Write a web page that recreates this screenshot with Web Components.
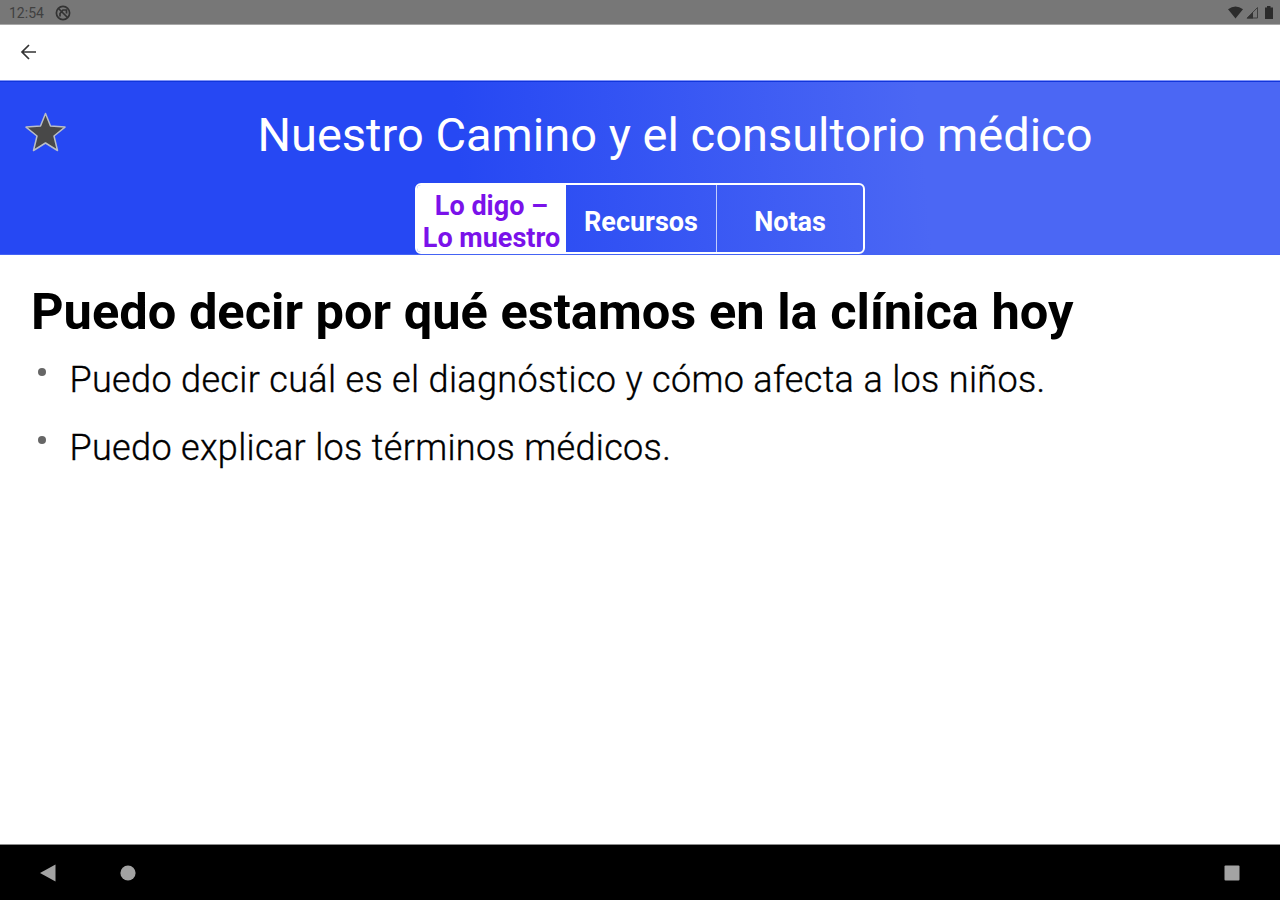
<!DOCTYPE html>
<html lang="es">
<head>
<meta charset="utf-8">
<meta name="viewport" content="width=device-width, initial-scale=1">
<title>Nuestro Camino y el consultorio médico</title>
<style>
    body {
        margin: 0;
        font-family: Roboto, "Liberation Sans", sans-serif;
        background-color: #fff;
    }
</style>
</head>
<body>
<app-screen>
    <status-bar slot="top" time="12:54"></status-bar>
    <tool-bar slot="top"></tool-bar>
    <topic-header slot="top">
        <span slot="title">Nuestro Camino y el consultorio médico</span>
        <tab-group slot="tabs">
            <tab-item selected>Lo digo –<br>Lo muestro</tab-item>
            <tab-item>Recursos</tab-item>
            <tab-item>Notas</tab-item>
        </tab-group>
    </topic-header>
    <topic-section>
        <span slot="heading">Puedo decir por qué estamos en la clínica hoy</span>
        <bullet-item>Puedo decir cuál es el diagnóstico y cómo afecta a los niños.</bullet-item>
        <bullet-item>Puedo explicar los términos médicos.</bullet-item>
    </topic-section>
    <nav-bar slot="bottom"></nav-bar>
</app-screen>

<script>
class BaseElement extends HTMLElement {

    constructor() {
        super();
        this.shadowDOM = this.attachShadow({ mode: "open" });
    }

    connectedCallback() {
        this.render();
    }
}

class AppScreen extends BaseElement {
    render() {
        this.shadowDOM.innerHTML = `
        <style>
            :host {
                display: flex;
                flex-direction: column;
                height: 900px;
                overflow: hidden;
            }

            main {
                flex: 1;
            }
        </style>

        <slot name="top"></slot>
        <main><slot></slot></main>
        <slot name="bottom"></slot>
        `
    }
}

class StatusBar extends BaseElement {
    render() {
        this.shadowDOM.innerHTML = `
        <style>
            :host {
                display: flex;
                align-items: center;
                justify-content: space-between;
                box-sizing: border-box;
                height: 25px;
                padding: 1px 5px 0 9px;
                background-color: #777;
                border-bottom: 1px solid #a8a8a8;
                color: #404040;
                font-size: 14px;
            }

            div {
                display: flex;
                align-items: center;
            }

            .left {
                gap: 11px;
            }

            .right {
                gap: 3px;
            }

            svg {
                display: block;
            }
        </style>

        <div class="left">
            <span>${this.getAttribute("time")}</span>
            <svg width="16" height="16" viewBox="0 0 16 16" fill="none" stroke="#333" stroke-width="1.7">
                <circle cx="8" cy="8" r="6.6"/>
                <path d="M3.500 3.500L12.500 12.500M5 11.500V8.500L8 5H11.500V8.500"/>
            </svg>
        </div>
        <div class="right">
            <svg width="15" height="13" viewBox="0 0 15 13"><path d="M0 3.200Q7.500-2.400 15 3.200L7.500 12.500z" fill="#2b2b2b"/></svg>
            <svg width="13" height="13" viewBox="0 0 13 13">
                <path d="M1.200 12L11.500 1.500V12z" fill="none" stroke="#3f3f3f"/>
                <path d="M0.500 12.500L7 6V12.500z" fill="#333"/>
            </svg>
            <svg width="13" height="13" viewBox="0 0 13 13"><path d="M3 1.500H5V0H8.500V1.500H11V13H3z" fill="#2b2b2b"/></svg>
        </div>
        `
    }
}

class ToolBar extends BaseElement {
    render() {
        this.shadowDOM.innerHTML = `
        <style>
            :host {
                display: flex;
                align-items: center;
                box-sizing: border-box;
                height: 55px;
                padding: 0 0 1px 20px;
                background-color: #fff;
            }
        </style>

        <svg width="17" height="16" viewBox="0 0 17 16" fill="none" stroke="#333" stroke-width="1.700">
            <path d="M16 8H2M9 1L2 8l7 7"/>
        </svg>
        `
    }
}

class TopicHeader extends BaseElement {
    render() {
        this.shadowDOM.innerHTML = `
        <style>
            :host {
                display: flex;
                flex-direction: column;
                box-sizing: border-box;
                height: 175px;
                background: linear-gradient(85deg, #2648f3 36%, #4b67f4 72%);
                border-top: 1px solid #8496f6;
                border-bottom: 1px solid #4463f4;
                box-shadow: inset 0 2px 0 -1px #1035dc;
                color: #fff;
            }

            .row {
                display: flex;
                align-items: center;
                height: 102px;
                padding-left: 24px;
            }

            .title {
                flex: 1;
                margin-right: -4px;
                padding-top: 4px;
                text-align: center;
                font-size: 47px;
                white-space: nowrap;
            }

            .tabs {
                display: flex;
                justify-content: center;
            }
        </style>

        <div class="row">
            <svg width="42" height="42" viewBox="0 0 42 42">
                <path d="M21.500 2.500l5 12.500L41 16.100 30 25l3.500 14.500L21.500 32 9.500 39.500 13 25 2 16.100l14.500-1.100z" fill="#484848" stroke="#b9bec6" stroke-width="1.500" stroke-linejoin="round"/>
            </svg>
            <div class="title"><slot name="title"></slot></div>
        </div>
        <div class="tabs"><slot name="tabs"></slot></div>
        `
    }
}

class TabGroup extends BaseElement {
    render() {
        this.shadowDOM.innerHTML = `
        <style>
            :host {
                display: grid;
                grid-template-columns: 149px 151px 1fr;
                box-sizing: border-box;
                width: 450px;
                height: 71px;
                border: 2px solid #fff;
                border-radius: 6px;
                overflow: hidden;
            }
        </style>

        <slot></slot>
        `
    }
}

class TabItem extends BaseElement {
    render() {
        this.shadowDOM.innerHTML = `
        <style>
            :host {
                display: flex;
                align-items: center;
                justify-content: center;
                padding-top: 5px;
                border-right: 1px solid #c3cdfb;
                text-align: center;
                font-size: 27px;
                font-weight: 700;
                line-height: 32px;
                white-space: nowrap;
            }

            :host(:last-child) {
                border-right: 0;
            }

            :host([selected]) {
                border-right: 0;
                background-color: #fff;
                color: #7a12ea;
            }
        </style>

        <span><slot></slot></span>
        `
    }
}

class TopicSection extends BaseElement {
    render() {
        this.shadowDOM.innerHTML = `
        <style>
            :host {
                display: block;
                padding: 28px 31px 0;
                color: #000;
            }

            h1 {
                margin: 0 0 8px;
                font-size: 50.600px;
                font-weight: 700;
                line-height: 58px;
                white-space: nowrap;
            }
        </style>

        <h1><slot name="heading"></slot></h1>
        <slot></slot>
        `
    }
}

class BulletItem extends BaseElement {
    render() {
        this.shadowDOM.innerHTML = `
        <style>
            :host {
                display: flex;
                height: 68.400px;
                font-size: 36px;
                font-weight: 300;
                line-height: 62px;
                letter-spacing: 0.340px;
                -webkit-text-stroke: 0.350px #000;
                white-space: nowrap;
            }

            i {
                width: 8px;
                height: 8px;
                margin: 19px 23.500px 0 7px;
                border-radius: 50%;
                background-color: #666;
            }
        </style>

        <i></i>
        <span><slot></slot></span>
        `
    }
}

class NavBar extends BaseElement {
    render() {
        this.shadowDOM.innerHTML = `
        <style>
            :host {
                display: flex;
                align-items: center;
                box-sizing: border-box;
                height: 56px;
                padding: 0 40px;
                border-top: 1px solid #8c8c8c;
                background-color: #000;
            }

            .home {
                margin-left: 64px;
            }

            .recent {
                margin-left: auto;
            }
        </style>

        <svg width="16" height="18" viewBox="0 0 16 18"><path d="M0 9L15.500 0.500v17z" fill="#a3a3a3"/></svg>
        <svg class="home" width="16" height="16" viewBox="0 0 16 16"><circle cx="8" cy="8" r="7.600" fill="#a3a3a3"/></svg>
        <svg class="recent" width="16" height="16" viewBox="0 0 16 16"><rect x="0.500" y="0.500" width="15" height="15" rx="1" fill="#a3a3a3"/></svg>
        `
    }
}

customElements.define("app-screen", AppScreen);
customElements.define("status-bar", StatusBar);
customElements.define("tool-bar", ToolBar);
customElements.define("topic-header", TopicHeader);
customElements.define("tab-group", TabGroup);
customElements.define("tab-item", TabItem);
customElements.define("topic-section", TopicSection);
customElements.define("bullet-item", BulletItem);
customElements.define("nav-bar", NavBar);
</script>
</body>
</html>
